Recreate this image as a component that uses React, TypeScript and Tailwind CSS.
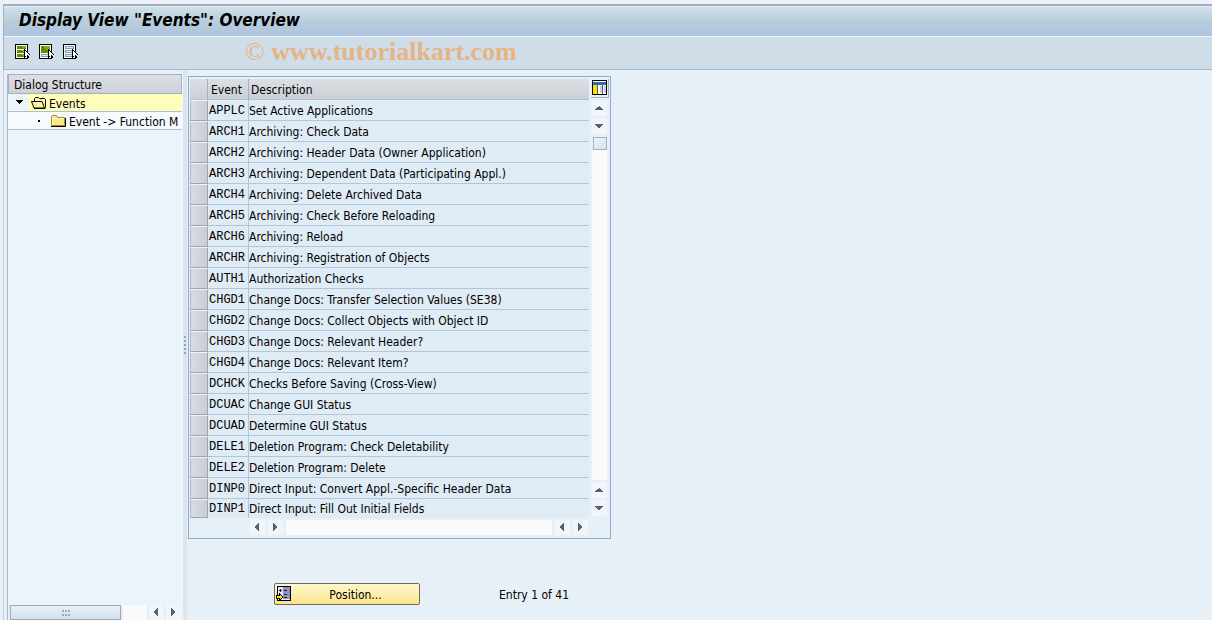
import { clsx } from "clsx";

type Direction = "up" | "down" | "left" | "right";

const events = [
  { id: "APPLC", text: "Set Active Applications" },
  { id: "ARCH1", text: "Archiving: Check Data" },
  { id: "ARCH2", text: "Archiving: Header Data (Owner Application)" },
  { id: "ARCH3", text: "Archiving: Dependent Data (Participating Appl.)" },
  { id: "ARCH4", text: "Archiving: Delete Archived Data" },
  { id: "ARCH5", text: "Archiving: Check Before Reloading" },
  { id: "ARCH6", text: "Archiving: Reload" },
  { id: "ARCHR", text: "Archiving: Registration of Objects" },
  { id: "AUTH1", text: "Authorization Checks" },
  { id: "CHGD1", text: "Change Docs: Transfer Selection Values (SE38)" },
  { id: "CHGD2", text: "Change Docs: Collect Objects with Object ID" },
  { id: "CHGD3", text: "Change Docs: Relevant Header?" },
  { id: "CHGD4", text: "Change Docs: Relevant Item?" },
  { id: "DCHCK", text: "Checks Before Saving (Cross-View)" },
  { id: "DCUAC", text: "Change GUI Status" },
  { id: "DCUAD", text: "Determine GUI Status" },
  { id: "DELE1", text: "Deletion Program: Check Deletability" },
  { id: "DELE2", text: "Deletion Program: Delete" },
  { id: "DINP0", text: "Direct Input: Convert Appl.-Specific Header Data" },
  { id: "DINP1", text: "Direct Input: Fill Out Initial Fields" },
];

const arrows: Record<Direction, string> = {
  up: "M7 5h1v1h1v1h1v1h1v1h-8v-1h1v-1h1v-1h2z",
  down: "M3 5h8v1h-1v1h-1v1h-1v1h-2v-1h-1v-1h-1v-1h-1z",
  left: "M9 3v8h-1v-1h-1v-1h-1v-1h-1v-2h1v-1h1v-1h1v-1z",
  right: "M5 3v8h1v-1h1v-1h1v-1h1v-2h-1v-1h-1v-1h-1v-1z",
};

const ScrollButton = ({ dir }: { dir: Direction }) => (
  <button type="button" aria-label={`Scroll ${dir}`} className="h-[15px] w-[15px] shrink-0 bg-[#f2f6fb]">
    <svg viewBox="0 0 15 15" width="15" height="15" shapeRendering="crispEdges">
      <path d={arrows[dir]} fill="#4d6475" />
    </svg>
  </button>
);

const SelectIcon = ({ kind }: { kind: "all" | "block" | "none" }) => (
  <svg viewBox="0 0 16 16" width="16" height="16" shapeRendering="crispEdges">
    <path d="M0 0h13v15H0z" fill="#000" />
    <path d="M1 1h11v13H1z" fill="#fff" />
    {kind === "all" && (
      <>
        <path d="M2 2h9v3H2zM2 6h9v3H2zM2 10h9v3H2z" fill="#5f8c00" />
        <path d="M7 2h1v1h-1zM9 2h1v1h-1zM8 3h1v1h-1zM10 3h1v1h-1zM7 6h1v1h-1zM9 6h1v1h-1zM8 7h1v1h-1zM7 10h1v1h-1zM8 11h1v1h-1z" fill="#a6c83a" />
      </>
    )}
    {kind === "block" && (
      <>
        <path d="M2 2h9v7H2z" fill="#5f8c00" />
        <path d="M5 2h1v1h-1zM7 2h1v1h-1zM9 2h1v1h-1zM6 3h1v1h-1zM8 3h1v1h-1zM10 3h1v1h-1zM7 4h1v1h-1zM9 4h1v1h-1zM8 5h1v1h-1z" fill="#a6c83a" />
        <path d="M2 10h9v3H2z" fill="#7f9fb4" />
        <path d="M3 11h8v1H3z" fill="#dbe8f0" />
      </>
    )}
    {kind === "none" && (
      <>
        <path d="M2 2h9v3H2zM2 6h9v3H2zM2 10h9v3H2z" fill="#7f9fb4" />
        <path d="M3 3h7v1H3zM3 7h7v1H3zM3 11h7v1H3z" fill="#dbe8f0" />
      </>
    )}
    <path d="M9 5h1v1h1v1h1v1h1v1h1v1h1v1h-2v1h1v2h-2v-2h-1v1h-1v1H9z" fill="#000" />
    <path d="M10 7h1v1h1v1h1v1h1v1h-2v3h-1v-2h-1z" fill="#fff" />
  </svg>
);

const FolderIcon = ({ open }: { open?: boolean }) =>
  open ? (
    <svg viewBox="0 0 16 12" width="16" height="12" className="shrink-0">
      <path d="M3.500 4.500v-3l1-1h3l1 1h5l1 1v8" fill="#fdf6b4" stroke="#000" />
      <path d="M.5 4.500h10.500l2.500 6.500H3z" fill="#fff5a0" stroke="#000" strokeLinejoin="round" />
      <path d="M3 11.500h11.500" stroke="#000" />
    </svg>
  ) : (
    <svg viewBox="0 0 16 12" width="16" height="12" className="shrink-0">
      <path d="M.5 10.500v-9l1-1h4l1 2h7v8z" fill="#fbe87e" stroke="#a08a3c" />
      <path d="M1.500 9.500v-6h11" fill="none" stroke="#fffbd0" />
      <path d="M0 11.500h14.500V3" fill="none" stroke="#000" />
    </svg>
  );

const LayoutIcon = () => (
  <svg viewBox="0 0 15 15" width="15" height="15" shapeRendering="crispEdges">
    <path d="M0 0h15v15H0z" fill="#000" />
    <path d="M1 1h13v13H1z" fill="#fff" />
    <path d="M1 2h4v3H1zM6 2h4v3H6zM11 2h3v3h-3z" fill="#1f72c0" />
    <path d="M1 5h4v9H1z" fill="#ffe100" />
    <path d="M8 6h2v7H8zM12 6h2v7h-2z" fill="#c8ccd6" />
    <path d="M5 2h1v12H5zM10 2h1v12h-1z" fill="#4a5b70" />
  </svg>
);

const PositionIcon = () => (
  <svg viewBox="0 0 16 16" width="16" height="16" shapeRendering="crispEdges">
    <path d="M1 0h14v15H1z" fill="#000" />
    <path d="M2 1h12v13H2z" fill="#dfe6f2" />
    <path d="M7 1h7v12H7z" fill="#9090c4" />
    <path d="M3 4h3v1H3zM4 3h1v3H4zM8 4h3v1H8zM8 8h3v1H8zM8 11h3v1H8z" fill="#222238" />
    <path d="M0 9h3V7h1v1h1v1h1v1h1v2H6v1H5v1H4v1H3v-2H0z" fill="#000" />
    <path d="M1 10h3V9h1v1h1v2H5v1H4v-1H1z" fill="#ffe600" />
  </svg>
);

const DialogStructure = () => (
  <aside className="flex w-[176px] shrink-0 flex-col border-r border-l border-r-[#f4f8fc] border-l-[#a9b8c7] bg-[#ebf3fb]">
    <h2 className="h-5 shrink-0 border border-[#a5b0bd] bg-linear-to-b from-[#dce0e5] to-[#cdd1d7] pl-[5px] leading-5">
      Dialog Structure
    </h2>
    <ul>
      <li className="flex h-[18px] border-b border-[#a9bfd3]">
        <button type="button" aria-label="Collapse Events" className="flex w-5 items-start justify-center pt-[6px] pl-[2px]">
          <svg viewBox="0 0 7 4" width="7" height="4" shapeRendering="crispEdges">
            <path d="M0 0h7v1H6v1H5v1H4v1H3V3H2V2H1V1H0z" fill="#000" />
          </svg>
        </button>
        <button type="button" className="flex flex-1 items-center gap-[2px] bg-[#fffdb9] pl-[3px]">
          <FolderIcon open />
          <span className="pt-[2px] leading-4">Events</span>
        </button>
      </li>
      <li className="flex h-[18px] border-b border-[#a9bfd3] bg-[#f6faff]">
        <button type="button" className="flex items-center whitespace-nowrap pl-[30px]">
          <span className="mr-[11px] h-[2px] w-[2px] shrink-0 bg-black" />
          <FolderIcon />
          <span className="pt-[2px] pl-[2px] leading-4">Event -&gt; Function M</span>
        </button>
      </li>
    </ul>
    <div className="mt-auto flex h-[15px] shrink-0 gap-[2px] bg-[#e6edf4] pr-px pl-[2px]">
      <div className="flex h-[15px] w-[111px] items-center justify-center border border-[#9dabbc] bg-linear-to-b from-[#e9f0f7] to-[#d3dfea]">
        <svg viewBox="0 0 8 6" width="8" height="6" shapeRendering="crispEdges">
          <path d="M0 0h2v2H0zM3 0h2v2H3zM6 0h2v2H6zM0 4h2v2H0zM3 4h2v2H3zM6 4h2v2H6z" fill="#9aa9b8" />
        </svg>
      </div>
      <div className="flex-1 bg-[#fafafa]" />
      <ScrollButton dir="left" />
      <ScrollButton dir="right" />
    </div>
  </aside>
);

const headCell = "h-[21px] border-b border-[#b5c1ce] bg-linear-to-b from-[#dcdfe4] to-[#cbd0d6] p-0 pt-px text-left font-normal leading-[18px]";
const bodyCell = "border-b border-[#b4c6d6] bg-[#dfebf5] p-0 pt-[2px] leading-[18px] whitespace-nowrap group-last:border-b-0 group-last:pt-px";

const EventTable = () => (
  <section className="w-[423px] border border-[#8badcf] bg-[#e8f0f7] pt-[2px] pl-px">
    <div className="flex">
      <table className="w-[399px] table-fixed border-separate border-spacing-0">
        <thead>
          <tr>
            <th aria-label="Selection" className={clsx(headCell, "w-[18px] border-r border-r-[#a5b0bd]")} />
            <th className={clsx(headCell, "w-[41px] border-r border-r-[#a5b0bd] pl-[3px]")}>Event</th>
            <th className={clsx(headCell, "pl-[2px]")}>Description</th>
          </tr>
        </thead>
        <tbody>
          {events.map((event) => (
            <tr key={event.id} className="group">
              <td className="p-0">
                <button
                  type="button"
                  aria-label={`Select ${event.id}`}
                  className="block h-[21px] w-[18px] border border-t-[#f0f3f7] border-l-[#b4bdc8] border-r-[#98a5b5] border-b-[#98a5b5] bg-linear-to-r from-[#d9dce1] to-[#c9ced4] group-last:h-[19px]"
                />
              </td>
              <td className={clsx(bodyCell, "border-r pl-px font-['Liberation_Mono',monospace]")}>{event.id}</td>
              <td className={bodyCell}>{event.text}</td>
            </tr>
          ))}
        </tbody>
      </table>
      <div className="flex w-5 flex-col items-center gap-[3px] pb-[2px] pl-px">
        <button type="button" aria-label="Table settings" className="flex h-[19px] items-start border-r border-b border-[#a5b0bd] px-px pt-px">
          <LayoutIcon />
        </button>
        <ScrollButton dir="up" />
        <ScrollButton dir="down" />
        <div className="h-[13px] w-[14px] shrink-0 border border-[#9fb0c1] bg-linear-to-br from-[#edf3f9] to-[#d6e2ee]" />
        <div className="-mt-[3px] w-[15px] flex-1 bg-[#fafafb]" />
        <ScrollButton dir="up" />
        <ScrollButton dir="down" />
      </div>
    </div>
    <div className="flex h-5 gap-[3px] pt-[2px] pr-[22px] pl-[60px]">
      <ScrollButton dir="left" />
      <ScrollButton dir="right" />
      <div className="h-[15px] flex-1 bg-[#fafafb]" />
      <ScrollButton dir="left" />
      <ScrollButton dir="right" />
    </div>
  </section>
);

const App = () => {
  return (
    <div className="flex h-screen flex-col overflow-hidden bg-[#e8f0f7] pl-[3px] font-['DejaVu_Sans_Condensed','DejaVu_Sans',sans-serif] text-[12px] text-black">
      <div className="h-1 shrink-0 bg-[#eff3f9]" />
      <header className="shrink-0 border-t-2 border-l border-[#a5b0c4]">
        <h1 className="h-[31px] border-t border-b border-t-[#dfe9f2] border-b-[#e9f1f8] bg-linear-to-b from-[#d1e0ed] via-[#b9cdda] to-[#adc4e0] pl-[15px] text-[17px] leading-[26px] font-bold italic">
          Display View "Events": Overview
        </h1>
        <div className="flex h-[33px] items-center border-b border-[#a6b8c9] bg-[#cfdde8] pb-[2px] pl-[11px]">
          <div className="flex gap-2">
            <button type="button" aria-label="Select all">
              <SelectIcon kind="all" />
            </button>
            <button type="button" aria-label="Select block">
              <SelectIcon kind="block" />
            </button>
            <button type="button" aria-label="Deselect all">
              <SelectIcon kind="none" />
            </button>
          </div>
          <p className="pl-[166px] font-['Liberation_Serif',serif] text-[26px] leading-7 text-[#e5b484]">
            © <span className="font-bold">www.tutorialkart.com</span>
          </p>
        </div>
      </header>
      <div className="flex min-h-0 flex-1 border-l border-[#c3cfdb] pt-1 pl-[3px]">
        <DialogStructure />
        <div className="-mt-1 flex w-1 shrink-0 items-center justify-center bg-[#dae5ec]">
          <svg viewBox="0 0 2 18" width="2" height="18" shapeRendering="crispEdges">
            <path d="M0 0h2v2H0zM0 4h2v2H0zM0 8h2v2H0zM0 12h2v2H0zM0 16h2v2H0z" fill="#93a5b5" />
          </svg>
        </div>
        <main className="min-w-0 flex-1 pt-[2px] pl-px">
          <EventTable />
          <div className="mt-11 ml-[86px] flex items-center">
            <button
              type="button"
              className="flex h-[22px] w-[146px] items-center rounded-xs border border-[#6b6b60] bg-linear-to-b from-[#fff8cf] to-[#fbe48b] pl-px"
            >
              <PositionIcon />
              <span className="flex-1 pt-[2px] text-center">Position...</span>
            </button>
            <p className="pt-[2px] pl-[79px]">Entry 1 of 41</p>
          </div>
        </main>
      </div>
    </div>
  );
};

export default App;
